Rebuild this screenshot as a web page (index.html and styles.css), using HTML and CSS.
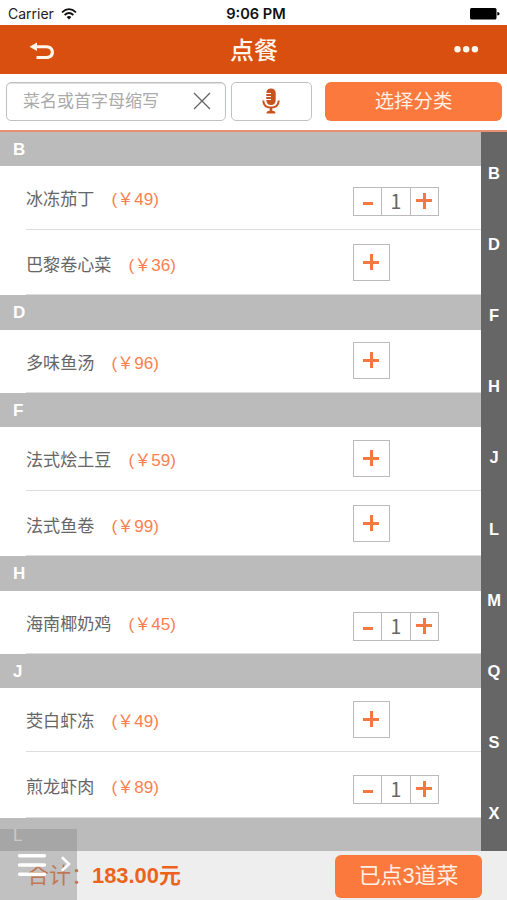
FILE: index.html
```
<!DOCTYPE html>
<html lang="zh-CN">
<head>
<meta charset="utf-8">
<title>点餐</title>
<link rel="stylesheet" href="styles.css">
</head>
<body>
<div class="app">
  <div class="status">
    <div class="carrier">Carrier
      <svg width="16" height="12" viewBox="0 0 16 12"><g fill="none" stroke="#111" stroke-width="1.8"><path d="M1 4.3Q8-2 15 4.3"/><path d="M3.6 7Q8 3.1 12.4 7"/></g><path d="M5.6 9Q8 7 10.4 9L8 11.5z" fill="#111"/></svg>
    </div>
    <div class="clock">9:06 PM</div>
    <svg class="battery" width="30" height="12" viewBox="0 0 30 12"><rect width="26.5" height="11.5" rx="1.5"/><path d="M27.3 4Q29.6 4 29.6 5.8T27.3 7.6z"/></svg>
  </div>
  <header class="nav">
    <svg class="back" width="26" height="18" viewBox="0 0 26 18"><path d="M0.5 4.8L8 .5V3.2H17.5C22 3.2 25 6 25 10.2S22 17 17.5 17H7.5V14H17.2C20 14 21.8 12.600 21.800 10.200S20 6.200 17.200 6.200H8V9z" fill="#fff5ea"/></svg>
    <h1>点餐</h1>
    <svg class="more" width="25" height="8" viewBox="0 0 25 8" fill="#fff5ea"><circle cx="3.500" cy="3.200" r="3.200"/><circle cx="12.200" cy="3.200" r="3.200"/><circle cx="20.900" cy="3.200" r="3.200"/></svg>
  </header>
  <div class="tools">
    <div class="search"><span>菜名或首字母缩写</span>
      <svg width="18" height="18" viewBox="0 0 18 18"><path d="M1 1L17 17M17 1L1 17" stroke="#666" stroke-width="1.300"/></svg>
    </div>
    <div class="mic">
      <svg width="18" height="26" viewBox="0 0 18 26"><path d="M9 .5C12 .5 13.700 2.500 13.700 5V12C13.700 15 12 17 9 17S4.300 15 4.300 12V5C4.300 2.500 6 .5 9 .5z" fill="#c9521f"/><path d="M3.500 5.500H9M3.500 8.500H9M3.500 11.500H9" stroke="#fff" stroke-width="1.200"/><path d="M1.200 12.500C1.500 17 4.500 19.600 9 19.600S16.500 17 16.800 12.500" fill="none" stroke="#c9521f" stroke-width="2"/><path d="M7.700 19H10.300V22.800Q13.500 23 13.500 25.500H4.500Q4.500 23 7.700 22.800z" fill="#c9521f"/></svg>
    </div>
    <div class="category">选择分类</div>
  </div>
  <main class="main">
    <div class="menu">
      <h2>B</h2>
      <div class="row"><div class="dish">冰冻茄丁<b>(￥49)</b></div><div class="step"><i class="minus"></i><span>1</span><i class="plus"></i></div></div>
      <div class="row next"><div class="dish">巴黎卷心菜<b>(￥36)</b></div><div class="add"><i class="plus"></i></div></div>
      <h2>D</h2>
      <div class="row"><div class="dish">多味鱼汤<b>(￥96)</b></div><div class="add"><i class="plus"></i></div></div>
      <h2>F</h2>
      <div class="row"><div class="dish">法式烩土豆<b>(￥59)</b></div><div class="add"><i class="plus"></i></div></div>
      <div class="row next"><div class="dish">法式鱼卷<b>(￥99)</b></div><div class="add"><i class="plus"></i></div></div>
      <h2>H</h2>
      <div class="row"><div class="dish">海南椰奶鸡<b>(￥45)</b></div><div class="step"><i class="minus"></i><span>1</span><i class="plus"></i></div></div>
      <h2>J</h2>
      <div class="row"><div class="dish">茭白虾冻<b>(￥49)</b></div><div class="add"><i class="plus"></i></div></div>
      <div class="row next"><div class="dish">煎龙虾肉<b>(￥89)</b></div><div class="step"><i class="minus"></i><span>1</span><i class="plus"></i></div></div>
      <h2 class="light">L</h2>
    </div>
    <nav class="index"><span>B</span><span>D</span><span>F</span><span>H</span><span>J</span><span>L</span><span>M</span><span>Q</span><span>S</span><span>X</span></nav>
  </main>
  <footer class="footer">
    <div class="total"><span class="label">合计：</span><b>183.00元</b></div>
    <div class="ordered">已点3道菜</div>
  </footer>
  <div class="drawer">
    <svg width="77" height="71" viewBox="0 0 77 71" fill="none" stroke="#fff" stroke-linecap="round"><path d="M19.500 26.800H44.500M19.500 36H44.500M19.500 45.200H44.500" stroke-width="3.400"/><path d="M62 28.200L69 35L62 41.800" stroke-width="2.600" stroke-linecap="butt"/></svg>
  </div>
</div>
</body>
</html>
```
FILE: styles.css
```
* { box-sizing: border-box; }
body {
  margin: 0;
  background: #fff;
  font-family: "Liberation Sans", "Noto Sans CJK SC", sans-serif;
  color: #666;
}
.app {
  position: relative;
  width: 507px;
  height: 900px;
  overflow: hidden;
  display: flex;
  flex-direction: column;
}
.status {
  height: 25px;
  flex: none;
  display: grid;
  grid-template-columns: 1fr auto 1fr;
  align-items: center;
  padding: 2px 7px 0 8px;
  font: 14px/20px Inter, sans-serif;
  color: #222;
}
.carrier { display: flex; align-items: center; gap: 7px; }
.clock { margin-left: 4px; font-weight: 600; font-size: 14.6px; color: #111; }
.battery { justify-self: end; }
.nav {
  height: 49px;
  flex: none;
  display: grid;
  grid-template-columns: 1fr auto 1fr;
  align-items: center;
  padding: 0 28px 0 29px;
  background: #d94f0f;
}
.nav h1 {
  margin: 2px 0 0;
  font-size: 24px;
  line-height: 34px;
  font-weight: 500;
  color: #fff5ea;
}
.back { margin-top: 3px; }
.more { justify-self: end; }
.tools {
  height: 56px;
  flex: none;
  display: flex;
  padding: 7.5px 5px 0 6px;
}
.search, .mic {
  height: 39px;
  border: 1.5px solid #bfc2c5;
  border-radius: 5px;
  display: flex;
  align-items: center;
}
.search {
  width: 220px;
  justify-content: space-between;
  padding: 0 14px 0 16px;
  box-shadow: inset 0 1px 1px #ddd;
  font-size: 17px;
  line-height: 26px;
  color: #aaa;
}
.search span { margin-top: 2px; }
.mic { width: 81px; margin-left: 5px; padding-right: 1px; justify-content: center; }
.category {
  flex: 1;
  height: 39px;
  margin-left: 13px;
  border-radius: 6px;
  background: #fb793d;
  color: #fff0e4;
  font-size: 19.4px;
  line-height: 38px;
  text-align: center;
}
.main {
  height: 721px;
  flex: none;
  display: flex;
  overflow: hidden;
  border-top: 2px solid #e98f74;
}
.menu { width: 481px; }
.menu h2 {
  margin: 0;
  height: 34.3px;
  padding-left: 13px;
  background: #bbb;
  color: #fff;
  font-size: 17px;
  line-height: 36px;
}
.menu .light { font-weight: 400; }
.row {
  height: 63.4px;
  display: flex;
  align-items: flex-start;
  margin-left: 26px;
  border-bottom: 1px solid #ddd;
}
.next { height: 65.7px; padding-top: 2.4px; }
.dish {
  width: 327px;
  padding-top: 21px;
  font-size: 17.1px;
  line-height: 26px;
  white-space: nowrap;
}
.dish b { margin-left: 17px; font-weight: 400; color: #fc804f; }
.step {
  display: flex;
  width: 86px;
  height: 29px;
  margin-top: 21px;
  border: 1px solid #bbb;
}
.step > * { flex: 1; }
.step > * + * { border-left: 1px solid #bbb; }
.step span {
  text-align: center;
  font: 19.5px/25px "Noto Sans CJK SC", sans-serif;
}
.add {
  display: flex;
  width: 37px;
  height: 37px;
  margin-top: 12.2px;
  border: 1px solid #bbb;
}
.add .plus { flex: 1; }
.plus {
  background:
    linear-gradient(#f67840, #f67840) 5px 11px / 16px 3px no-repeat,
    linear-gradient(#f67840, #f67840) 12px 5px / 3px 16px no-repeat;
}
.add .plus { background-position: 9px 16px, 16px 9px; }
.minus { background: linear-gradient(#f67840, #f67840) 50% 58% / 10px 3px no-repeat; }
.index {
  width: 26px;
  height: 719px;
  flex: none;
  display: flex;
  flex-direction: column;
  padding-top: 5.7px;
  background: #666;
}
.index span {
  flex: none;
  height: 71.2px;
  color: #fff;
  font-size: 16.5px;
  font-weight: 700;
  line-height: 71.2px;
  text-align: center;
}
.footer {
  flex: 1;
  display: flex;
  justify-content: space-between;
  padding: 4px 25px 0 27px;
  background: #eee;
}
.total {
  display: flex;
  font-size: 22px;
  line-height: 41px;
  color: #ec631c;
}
.label { width: 65px; white-space: nowrap; }
.total b { font-weight: 700; font-size: 21.9px; }
.ordered {
  width: 147px;
  height: 43px;
  border-radius: 6px;
  background: #fb793d;
  color: #fff0e4;
  font-size: 21.9px;
  line-height: 42px;
  text-align: center;
}
.drawer {
  position: absolute;
  left: 0;
  bottom: 0;
  width: 76.5px;
  height: 71px;
  background: rgba(144, 144, 144, .48);
}
```
